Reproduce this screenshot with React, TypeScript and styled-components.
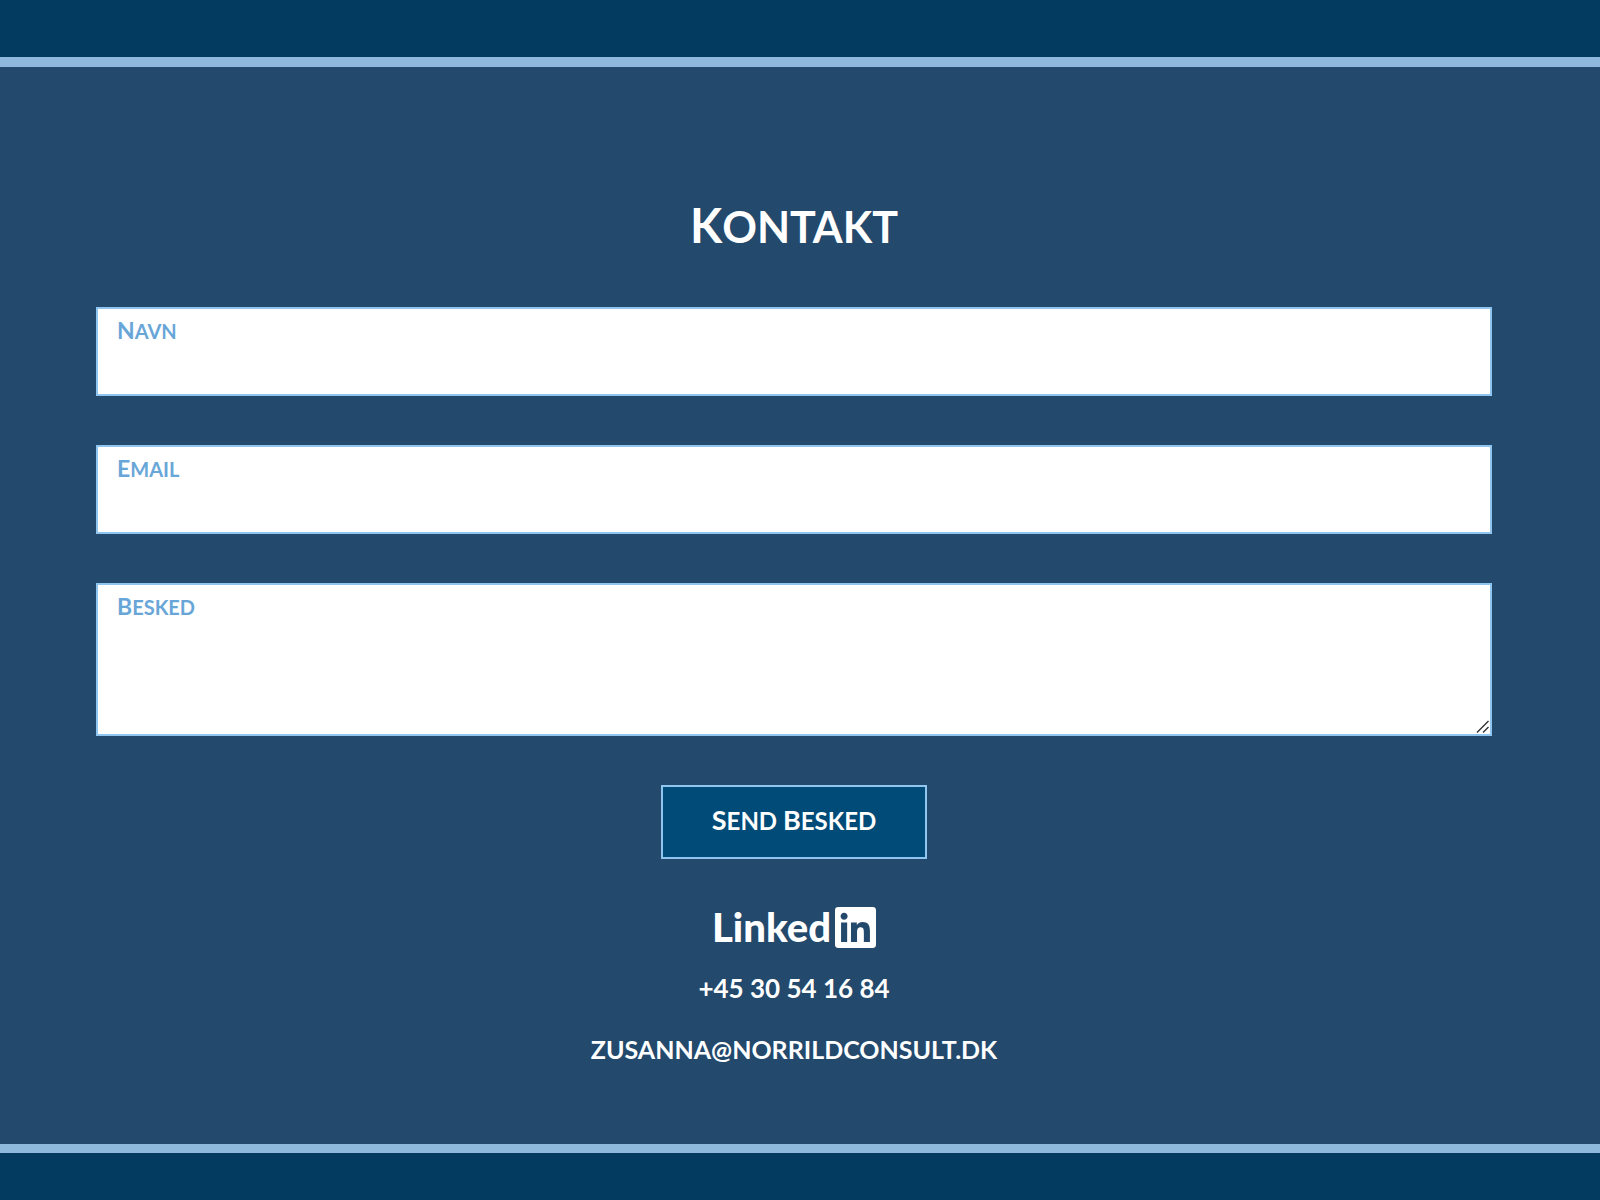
import React from "react";
import styled, { createGlobalStyle } from "styled-components";

const colors = {
  band: "#033b60",
  panel: "#23496c",
  rule: "#8eb9dd",
  outline: "#8fc5ee",
  label: "#69a6d8",
  button: "#004b78",
  text: "#ffffff",
};

const GlobalStyle = createGlobalStyle`
  *, *::before, *::after { box-sizing: border-box; }
  body {
    margin: 0;
    background: ${colors.band};
    color: ${colors.text};
    font-family: Lato, "Open Sans", sans-serif;
  }
`;

const Page = styled.div`
  display: flex;
  flex-direction: column;
  min-height: 100vh;
`;

const Band = styled.div<{ $height: number }>`
  min-height: ${(p) => p.$height}px;
  background: ${colors.band};
`;

const Panel = styled.main`
  flex: 1;
  display: flex;
  flex-direction: column;
  align-items: center;
  padding: 128px 108px 60px 96px;
  background: ${colors.panel};
  border-top: 10px solid ${colors.rule};
  border-bottom: 9px solid ${colors.rule};
`;

const Title = styled.h1`
  margin: 0 0 48px;
  font-size: 43px;
  line-height: 64px;
  font-weight: 700;
`;

const Initial = styled.span<{ $size: number }>`
  font-size: ${(p) => p.$size}px;
  line-height: 1;
`;

const Form = styled.form`
  align-self: stretch;
  display: flex;
  flex-direction: column;
  align-items: center;
  gap: 49px;
`;

const Field = styled.div`
  align-self: stretch;
  display: flex;
  flex-direction: column;
  background: #ffffff;
  border: 2px solid ${colors.outline};
`;

const Label = styled.label`
  padding: 8px 19px 0;
  color: ${colors.label};
  font-size: 20px;
  line-height: 28px;
  font-weight: 700;
`;

const Input = styled.input`
  height: 49px;
  padding: 0 19px;
  border: 0;
  outline: 0;
  background: transparent;
  color: ${colors.panel};
  font: inherit;
  font-size: 20px;
`;

const TextArea = styled.textarea`
  display: block;
  height: 113px;
  padding: 8px 19px;
  border: 0;
  outline: 0;
  resize: vertical;
  background: transparent;
  color: ${colors.panel};
  font: inherit;
  font-size: 20px;

  &::-webkit-resizer {
    background: url("data:image/svg+xml,%3Csvg xmlns='http://www.w3.org/2000/svg' width='15' height='15' viewBox='0 0 15 15'%3E%3Cpath d='M2 13.500 13.500 2M8 13.500 13.500 8' stroke='%23333' stroke-width='1.400' fill='none'/%3E%3C/svg%3E")
      no-repeat right bottom;
  }
`;

const SendButton = styled.button`
  width: 266px;
  height: 74px;
  padding: 0 0 4px;
  border: 2px solid ${colors.outline};
  background: ${colors.button};
  color: ${colors.text};
  font: inherit;
  font-size: 24px;
  font-weight: 700;
  cursor: pointer;
`;

const Contact = styled.address`
  display: flex;
  flex-direction: column;
  align-items: center;
  margin-top: 48px;
  font-style: normal;
`;

const ContactLink = styled.a<{ $size: number }>`
  margin-top: 20px;
  color: ${colors.text};
  font-size: ${(p) => p.$size}px;
  line-height: 41px;
  font-weight: 700;
  text-decoration: none;
`;

const LinkedInLink = styled.a`
  display: flex;
  align-items: center;
  gap: 4px;
  color: ${colors.text};
  font-size: 40px;
  line-height: 41px;
  font-weight: 900;
  text-decoration: none;
`;

const LinkedInMark = styled.svg`
  width: 41px;
  height: 41px;
  fill: currentColor;
`;

function Capitals({ text, size }: { text: string; size: number }) {
  return (
    <>
      {text.split(" ").map((word, i) => (
        <React.Fragment key={word}>
          {i > 0 && " "}
          <Initial $size={size}>{word[0]}</Initial>
          {word.slice(1).toUpperCase()}
        </React.Fragment>
      ))}
    </>
  );
}

export default function App() {
  return (
    <>
      <GlobalStyle />
      <Page>
        <Band $height={57} />
        <Panel>
          <Title>
            <Capitals text="Kontakt" size={47} />
          </Title>
          <Form onSubmit={(e) => e.preventDefault()}>
            <Field>
              <Label htmlFor="name">
                <Capitals text="Navn" size={23} />
              </Label>
              <Input id="name" type="text" />
            </Field>
            <Field>
              <Label htmlFor="email">
                <Capitals text="Email" size={23} />
              </Label>
              <Input id="email" type="email" />
            </Field>
            <Field>
              <Label htmlFor="message">
                <Capitals text="Besked" size={23} />
              </Label>
              <TextArea id="message" />
            </Field>
            <SendButton type="submit">
              <Capitals text="Send Besked" size={27} />
            </SendButton>
          </Form>
          <Contact>
            <LinkedInLink href="#linkedin">
              Linked
              <LinkedInMark viewBox="0 0 24 24" aria-hidden="true">
                <path d="M20.447 20.452h-3.554v-5.569c0-1.328-.027-3.037-1.852-3.037-1.853 0-2.136 1.445-2.136 2.939v5.667H9.351V9h3.414v1.561h.046c.477-.9 1.637-1.85 3.37-1.85 3.601 0 4.267 2.37 4.267 5.455v6.286zM5.337 7.433c-1.144 0-2.063-.926-2.063-2.065 0-1.138.92-2.063 2.063-2.063 1.14 0 2.064.925 2.064 2.063 0 1.139-.925 2.065-2.064 2.065zm1.782 13.019H3.555V9h3.564v11.452zM22.225 0H1.771C.792 0 0 .774 0 1.729v20.542C0 23.227.792 24 1.771 24h20.451C23.2 24 24 23.227 24 22.271V1.729C24 .774 23.2 0 22.222 0h.003z" />
              </LinkedInMark>
            </LinkedInLink>
            <ContactLink $size={26} href="tel:+4530541684">
              +45 30 54 16 84
            </ContactLink>
            <ContactLink $size={25} href="mailto:zusanna@norrildconsult.dk">
              ZUSANNA@NORRILDCONSULT.DK
            </ContactLink>
          </Contact>
        </Panel>
        <Band $height={47} />
      </Page>
    </>
  );
}
